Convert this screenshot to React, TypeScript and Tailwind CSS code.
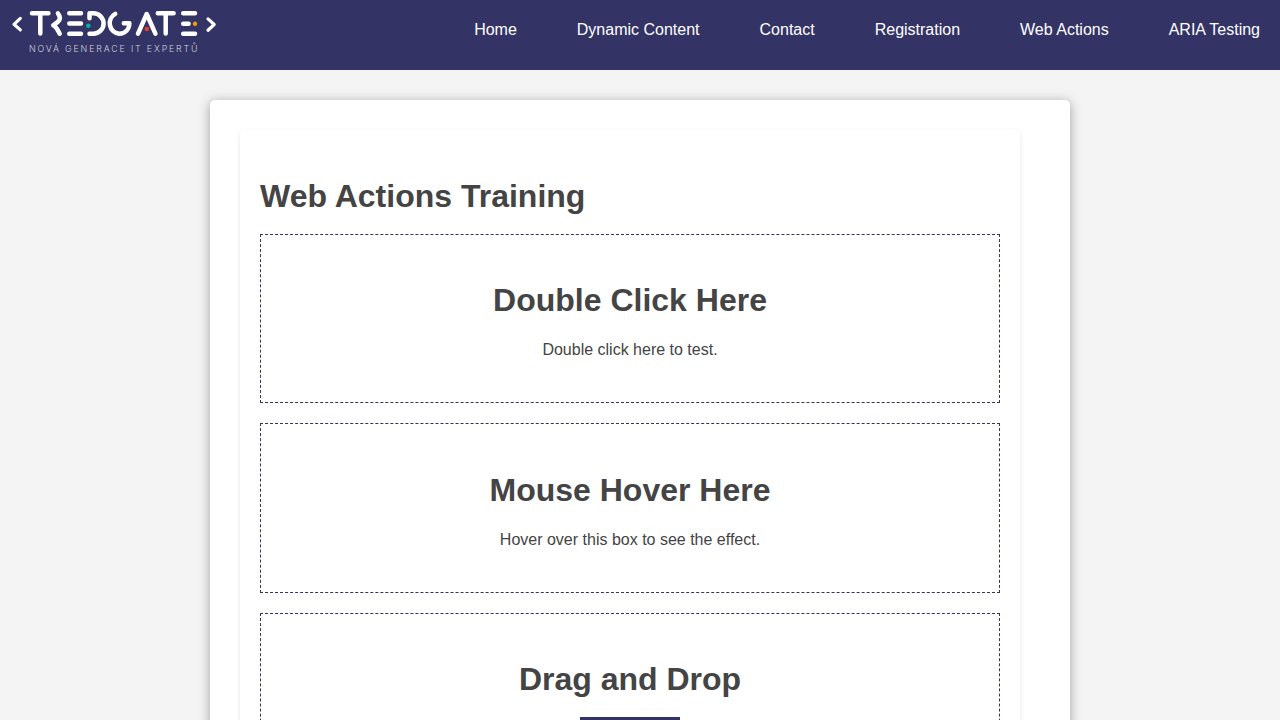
import React from "react";

const links = ["Home", "Dynamic Content", "Contact", "Registration", "Web Actions", "ARIA Testing"];

function Logo() {
  return (
    <svg width="230" height="60" viewBox="0 0 230 60" fill="none" stroke="#fff" strokeLinecap="round" strokeLinejoin="round" aria-label="Tredgate">
      <g strokeWidth="3.2">
        <path d="M20.3 18.4 14 24.3l6.3 5.6" />
        <path d="m208 18.9 6.2 5.6-6.2 5.7" />
      </g>
      <g strokeWidth="4.5">
        <path d="M32 13.3H48.4M40.3 13.3V33.6" />
        <path d="M57.9 13.3C60.6 16.6 60.4 19.8 57.5 22.2L53.2 25.3C56.8 26.6 58 31.2 59.7 33.7" />
        <path d="M69.3 13.3H81M69.3 23.6H81M69.3 33.7H81" />
        <path d="M89.5 18.2V13.3H93.4A10.2 10.2 0 0 1 93.4 33.7H89.5" />
        <path d="M115.2 13.9A10.6 10.6 0 0 0 119.2 33.7C125.2 33.7 129.2 29.4 129.4 23.2H123.8" />
        <path d="M138 33.6 146.7 14 155.4 33.6" />
        <path d="M157.8 13.3H173.6M165.7 13.3V33.6" />
        <path d="M183.2 13.3H195M183.2 23.8H188.6M183.2 33.7H195" />
      </g>
      <g stroke="none">
        <circle cx="88.3" cy="25.7" r="2.3" fill="#00b2a5" />
        <circle cx="146.8" cy="29" r="2.3" fill="#e63b32" />
        <circle cx="195" cy="23.8" r="2.2" fill="#f39a09" />
        <text x="29" y="52" fill="#d2d2df" fontFamily="Inter, sans-serif" fontWeight="300" fontSize="8.8" textLength="168.5" lengthAdjust="spacing">
          NOVÁ GENERACE IT EXPERTŮ
        </text>
      </g>
    </svg>
  );
}

function ActionBox({ title, children }: { title: string; children?: React.ReactNode }) {
  return (
    <section className="mb-5 h-[169.5px] border border-dashed border-[#333366] pt-[47.3px] text-center">
      <h1 className="text-[32px] leading-[36px] font-bold">{title}</h1>
      {children}
    </section>
  );
}

export default function App() {
  return (
    <div className="h-screen overflow-hidden bg-[#f4f4f4] font-['Liberation_Sans',Arial,sans-serif] text-base text-[#444444]">
      <header className="flex h-[70px] items-start justify-between bg-[#333366] pr-5 text-white">
        <Logo />
        <nav className="flex gap-[60px] pt-5 leading-5">
          {links.map((label) => (
            <a key={label} href="#">{label}</a>
          ))}
        </nav>
      </header>
      <main className="mx-auto mt-[30px] h-[1000px] w-[860px] rounded-[5px] bg-white p-[30px] shadow-[0_2px_12px_rgba(0,0,0,0.35)]">
        <div className="h-[900px] w-[780px] rounded-[5px] px-5 pt-12 shadow-[0_2px_5px_rgba(0,0,0,0.1)]">
          <h1 className="mb-[19.8px] text-[32px] leading-[36px] font-bold">Web Actions Training</h1>
          <ActionBox title="Double Click Here">
            <p className="mt-[22px] leading-5">Double click here to test.</p>
          </ActionBox>
          <ActionBox title="Mouse Hover Here">
            <p className="mt-[22px] leading-5">Hover over this box to see the effect.</p>
          </ActionBox>
          <ActionBox title="Drag and Drop">
            <div className="mx-auto mt-5 h-[50px] w-[100px] bg-[#333366]" />
          </ActionBox>
        </div>
      </main>
    </div>
  );
}
